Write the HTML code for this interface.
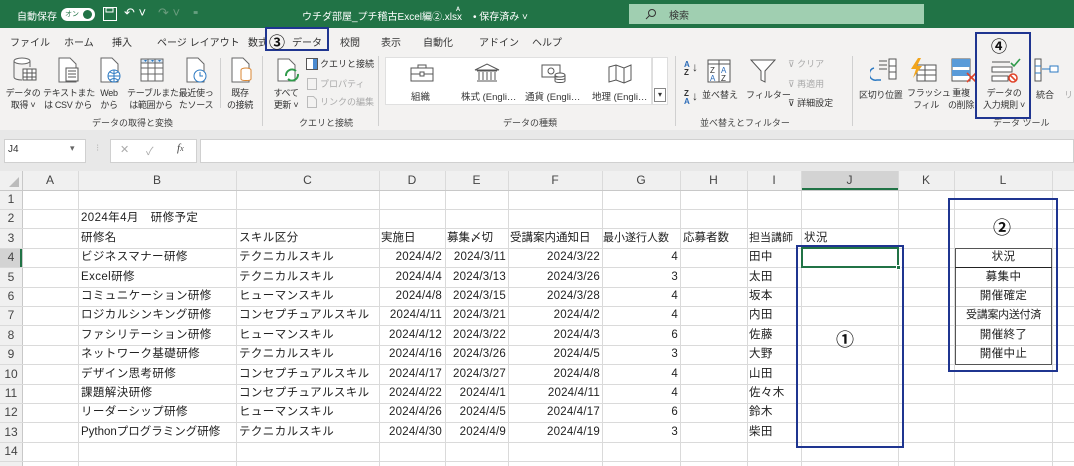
<!DOCTYPE html>
<html><head><meta charset="utf-8">
<style>
*{margin:0;padding:0;box-sizing:border-box}
body{width:1074px;height:466px;overflow:hidden;background:#fff;font-family:"Liberation Sans","Noto Sans CJK JP",sans-serif;position:relative;color:#333}
.a{position:absolute;white-space:nowrap}
.tb{font-size:10px;color:#fff}
.tab{font-size:10px;color:#333;top:34px}
.lb{font-size:9px;color:#333;text-align:center;line-height:12px;letter-spacing:-0.3px}
.gl{font-size:9px;color:#444;top:116px}
.sep{position:absolute;top:56px;width:1px;height:70px;background:#d0d0d0}
.vl{position:absolute;top:171px;width:1px;height:295px;background:#dadada}
.hl{position:absolute;left:0;width:1074px;height:1px;background:#dadada}
.ch{position:absolute;top:171px;height:19px;line-height:19px;font-size:12px;color:#444;text-align:center}
.rh{position:absolute;left:0;width:22px;height:19px;line-height:19px;font-size:12px;color:#444;text-align:center}
.c{position:absolute;height:19px;line-height:19px;font-size:11.5px;white-space:nowrap;color:#222;letter-spacing:0.4px;font-family:"Liberation Sans","Noto Sans CJK JP",sans-serif}
.r{text-align:right;letter-spacing:0.2px}
.bx{position:absolute;border:2px solid #1f3590}
.ic{position:absolute}
</style></head><body>
<!-- title bar -->
<div class="a" style="left:0;top:0;width:1074px;height:28px;background:#217346"></div>
<div class="a tb" style="left:17px;top:8px">自動保存</div>
<div class="a" style="left:61px;top:8px;width:34px;height:13px;border-radius:7px;background:#fff"></div>
<div class="a" style="left:65px;top:8px;font-size:7px;color:#217346;line-height:13px">オン</div>
<div class="a" style="left:83px;top:10px;width:9px;height:9px;border-radius:5px;background:#217346"></div>
<svg class="ic" style="left:102px;top:6px" width="16" height="16"><rect x="1.5" y="1.5" width="13" height="13" fill="none" stroke="#fff"/><rect x="4" y="2" width="7" height="4" fill="none" stroke="#fff"/></svg>
<div class="a tb" style="left:124px;top:5px;font-size:13px">↶ ˅</div>
<div class="a tb" style="left:158px;top:5px;font-size:13px;color:#6a9c7e">↷ ˅</div>
<div class="a tb" style="left:193px;top:6px">₌</div>
<div class="a tb" style="left:302px;top:8px">ウチダ部屋_プチ稽古Excel編②.xlsx</div>
<div class="a tb" style="left:456px;top:5px;font-size:9px">ᴬ</div>
<div class="a tb" style="left:473px;top:8px">• 保存済み ˅</div>
<div class="a" style="left:629px;top:4px;width:295px;height:20px;background:#a0cfb1"></div>
<svg class="ic" style="left:645px;top:8px" width="12" height="12"><circle cx="7" cy="5" r="3.5" fill="none" stroke="#333"/><line x1="4.5" y1="7.5" x2="1" y2="11" stroke="#333"/></svg>
<div class="a" style="left:669px;top:7px;font-size:10px;color:#333">検索</div>
<!-- ribbon -->
<div class="a" style="left:0;top:28px;width:1074px;height:102px;background:#f3f2f1"></div>
<div class="a" style="left:0;top:130px;width:1074px;height:41px;background:#e8e8e8"></div>
<div class="a tab" style="left:10px">ファイル</div>
<div class="a tab" style="left:64px">ホーム</div>
<div class="a tab" style="left:112px">挿入</div>
<div class="a tab" style="left:157px">ページ レイアウト</div>
<div class="a tab" style="left:248px">数式</div>
<div class="a tab" style="left:292px">データ</div>
<div class="a" style="left:292px;top:49px;width:27px;height:2px;background:#217346"></div>
<div class="a tab" style="left:340px">校閲</div>
<div class="a tab" style="left:381px">表示</div>
<div class="a tab" style="left:423px">自動化</div>
<div class="a tab" style="left:479px">アドイン</div>
<div class="a tab" style="left:532px">ヘルプ</div>
<div class="a" style="left:266px;top:28px;width:24px;height:22px;background:#f3f2f1"></div>
<div class="bx" style="left:265px;top:27px;width:64px;height:24px"></div>
<div class="a" style="left:269px;top:29px;font-size:16px;font-weight:bold;color:#111">③</div>
<!-- group 1 icons -->
<svg class="ic" style="left:12px;top:57px" width="26" height="26"><ellipse cx="10" cy="4" rx="8" ry="3" fill="#fff" stroke="#666"/><path d="M2 4v16c0 2 4 3 8 3" fill="none" stroke="#666"/><path d="M18 4v6" stroke="#666"/><rect x="11" y="12" width="13" height="11" fill="#fff" stroke="#555"/><path d="M11 16h13M11 20h13M15 12v11M20 12v11" stroke="#555"/></svg>
<svg class="ic" style="left:56px;top:57px" width="24" height="26"><path d="M3 1h11l6 6v18H3z" fill="#fff" stroke="#666"/><rect x="10" y="11" width="12" height="13" fill="#fff" stroke="#555"/><path d="M12 14h8M12 17h8M12 20h8" stroke="#555"/></svg>
<svg class="ic" style="left:98px;top:57px" width="24" height="26"><path d="M3 1h11l6 6v18H3z" fill="#fff" stroke="#666"/><circle cx="16" cy="19" r="6" fill="#fff" stroke="#2b79c2"/><path d="M10 19h12M16 13v12M12 15c3 2 5 2 8 0M12 23c3-2 5-2 8 0" fill="none" stroke="#2b79c2"/></svg>
<svg class="ic" style="left:139px;top:57px" width="26" height="26"><rect x="2" y="2" width="22" height="22" fill="#fff" stroke="#666"/><rect x="2" y="2" width="22" height="4" fill="#d7e7f6" stroke="#666"/><path d="M2 11h22M2 17h22M9 2v22M16 2v22" stroke="#666"/><path d="M5 3l1.5 2 1.5-2M12 3l1.5 2 1.5-2M19 3l1.5 2 1.5-2" fill="#2b79c2"/></svg>
<svg class="ic" style="left:184px;top:57px" width="24" height="26"><path d="M3 1h11l6 6v18H3z" fill="#fff" stroke="#666"/><circle cx="16" cy="19" r="6" fill="#fff" stroke="#2b79c2"/><path d="M16 15v4h3" fill="none" stroke="#2b79c2"/></svg>
<div class="sep" style="left:220px;top:58px;height:50px"></div>
<svg class="ic" style="left:229px;top:57px" width="24" height="26"><path d="M3 1h11l6 6v18H3z" fill="#fff" stroke="#666"/><ellipse cx="17" cy="13" rx="5" ry="2" fill="#fff" stroke="#d98532"/><path d="M12 13v9c0 2 10 2 10 0v-9" fill="#fff" stroke="#d98532"/></svg>
<div class="a lb" style="left:4px;top:87px;width:38px">データの<br>取得 ˅</div>
<div class="a lb" style="left:43px;top:87px;width:50px">テキストまた<br>は CSV から</div>
<div class="a lb" style="left:96px;top:87px;width:26px">Web<br>から</div>
<div class="a lb" style="left:127px;top:87px;width:48px">テーブルまた<br>は範囲から</div>
<div class="a lb" style="left:177px;top:87px;width:38px">最近使っ<br>たソース</div>
<div class="a lb" style="left:222px;top:87px;width:36px">既存<br>の接続</div>
<div class="a gl" style="left:92px">データの取得と変換</div>
<div class="sep" style="left:262px"></div>
<!-- group 2 -->
<svg class="ic" style="left:276px;top:58px" width="26" height="26"><path d="M2 1h11l6 6v16H2z" fill="#fff" stroke="#666"/><path d="M10 18a6 6 0 0 1 10-5M22 16a6 6 0 0 1-10 5" fill="none" stroke="#2f9a4a" stroke-width="2"/></svg>
<div class="a lb" style="left:268px;top:87px;width:36px">すべて<br>更新 ˅</div>
<svg class="ic" style="left:306px;top:58px" width="12" height="12"><rect x="0.5" y="0.5" width="11" height="11" fill="#fff" stroke="#555"/><rect x="7" y="1" width="4" height="10" fill="#4a8ad0"/></svg>
<div class="a" style="left:320px;top:57px;font-size:9px">クエリと接続</div>
<svg class="ic" style="left:306px;top:78px" width="12" height="12"><rect x="1.5" y="0.5" width="9" height="11" fill="none" stroke="#bbb"/></svg>
<div class="a" style="left:320px;top:77px;font-size:9px;color:#aaa">プロパティ</div>
<svg class="ic" style="left:306px;top:96px" width="12" height="12"><path d="M1.5 0.5h6l3 3v8h-9z" fill="none" stroke="#bbb"/></svg>
<div class="a" style="left:320px;top:95px;font-size:9px;color:#aaa">リンクの編集</div>
<div class="a gl" style="left:299px">クエリと接続</div>
<div class="sep" style="left:378px"></div>
<!-- group 3 -->
<div class="a" style="left:385px;top:57px;width:267px;height:48px;background:#fff;border:1px solid #e0e0e0"></div>
<svg class="ic" style="left:410px;top:64px" width="24" height="18"><rect x="1" y="4" width="22" height="13" fill="#fff" stroke="#555"/><rect x="8" y="1" width="8" height="3" fill="none" stroke="#555"/><path d="M1 10h22" stroke="#555"/><rect x="10" y="8" width="4" height="4" fill="#fff" stroke="#555"/></svg>
<svg class="ic" style="left:474px;top:63px" width="26" height="20"><path d="M1 7L13 1l12 6z" fill="#fff" stroke="#555"/><path d="M3 8h20M3 18h20M5 9v8M9 9v8M13 9v8M17 9v8M21 9v8" stroke="#555"/></svg>
<svg class="ic" style="left:541px;top:64px" width="26" height="20"><rect x="1" y="1" width="18" height="12" fill="#fff" stroke="#555"/><circle cx="10" cy="7" r="3" fill="none" stroke="#555"/><ellipse cx="19" cy="11" rx="5" ry="2" fill="#fff" stroke="#555"/><path d="M14 11v6c0 2 10 2 10 0v-6M14 14c0 2 10 2 10 0" fill="none" stroke="#555"/></svg>
<svg class="ic" style="left:608px;top:64px" width="24" height="20"><path d="M1 3l7-2 8 3 7-3v15l-7 3-8-3-7 2z M8 1v15M16 4v15" fill="#fff" stroke="#555"/></svg>
<div class="a" style="left:411px;top:89px;font-size:9.5px">組織</div>
<div class="a" style="left:461px;top:89px;font-size:9.5px">株式 (Engli…</div>
<div class="a" style="left:525px;top:89px;font-size:9.5px">通貨 (Engli…</div>
<div class="a" style="left:592px;top:89px;font-size:9.5px">地理 (Engli…</div>
<div class="a" style="left:652px;top:57px;width:16px;height:48px;background:#fff;border:1px solid #ddd"></div>
<div class="a" style="left:654px;top:88px;width:12px;height:14px;border:1px solid #888;font-size:8px;text-align:center;line-height:12px">▾</div>
<div class="a gl" style="left:503px">データの種類</div>
<div class="sep" style="left:675px"></div>
<!-- group 4 -->
<div class="a" style="left:684px;top:61px;font-size:8px;line-height:8px;color:#2b6bb8;font-weight:bold">A<br><span style="color:#333">Z</span></div>
<div class="a" style="left:692px;top:60px;font-size:12px">↓</div>
<div class="a" style="left:684px;top:90px;font-size:8px;line-height:8px;font-weight:bold">Z<br><span style="color:#2b6bb8">A</span></div>
<div class="a" style="left:692px;top:89px;font-size:12px">↓</div>
<svg class="ic" style="left:707px;top:59px" width="24" height="24"><rect x="1" y="1" width="22" height="22" fill="#fff" stroke="#555"/><path d="M1 5h22M12 1v22" stroke="#555"/><text x="3" y="14" font-size="8" fill="#333">Z</text><text x="14" y="14" font-size="8" fill="#2b6bb8">A</text><text x="3" y="22" font-size="8" fill="#2b6bb8">A</text><text x="14" y="22" font-size="8" fill="#333">Z</text></svg>
<div class="a" style="left:702px;top:88px;font-size:9px">並べ替え</div>
<svg class="ic" style="left:750px;top:58px" width="26" height="26"><path d="M1 2h24L15 13v11l-4-2v-9z" fill="#fff" stroke="#555"/></svg>
<div class="a" style="left:746px;top:88px;font-size:9px">フィルター</div>
<div class="a" style="left:788px;top:57px;font-size:9px;color:#aaa">⊽ クリア</div>
<div class="a" style="left:788px;top:77px;font-size:9px;color:#aaa">⊽ 再適用</div>
<div class="a" style="left:788px;top:96px;font-size:9px">⊽ 詳細設定</div>
<div class="a gl" style="left:700px">並べ替えとフィルター</div>
<div class="sep" style="left:852px"></div>
<!-- group 5 -->
<svg class="ic" style="left:870px;top:58px" width="28" height="26"><path d="M9 3h8M9 7h8M9 11h8" stroke="#555"/><rect x="19" y="1" width="7" height="20" fill="#fff" stroke="#555"/><path d="M19 8h7M19 14h7" stroke="#555"/><path d="M4 10a6 6 0 0 0 3 12h4" fill="none" stroke="#2b79c2" stroke-width="1.5"/></svg>
<div class="a" style="left:859px;top:88px;font-size:9px;letter-spacing:-0.3px">区切り位置</div>
<svg class="ic" style="left:907px;top:57px" width="30" height="26"><rect x="10" y="8" width="19" height="16" fill="#fff" stroke="#555"/><path d="M10 13h19M10 18h19M18 8v16" stroke="#555"/><path d="M11 1l-7 11h5l-3 9 9-12h-5l4-8z" fill="#f2a51c"/></svg>
<div class="a lb" style="left:907px;top:87px;width:38px">フラッシュ<br>フィル</div>
<svg class="ic" style="left:950px;top:58px" width="28" height="26"><rect x="2" y="1" width="18" height="22" fill="#fff" stroke="#555"/><rect x="2" y="1" width="18" height="8" fill="#5a9bd8"/><rect x="2" y="12" width="18" height="6" fill="#5a9bd8"/><path d="M17 15l9 9M26 15l-9 9" stroke="#e0452c" stroke-width="1.6"/></svg>
<div class="a lb" style="left:945px;top:87px;width:32px">重複<br>の削除</div>
<svg class="ic" style="left:991px;top:58px" width="30" height="26"><rect x="1" y="9" width="20" height="5" fill="#fff" stroke="#555"/><rect x="1" y="18" width="16" height="5" fill="#fff" stroke="#555"/><path d="M1 4h18" stroke="#555"/><path d="M20 5l3 3 6-7" fill="none" stroke="#2f9a4a" stroke-width="1.6"/><circle cx="22" cy="20" r="4" fill="#fff" stroke="#e0452c" stroke-width="1.6"/><path d="M19 17l6 6" stroke="#e0452c" stroke-width="1.6"/></svg>
<div class="a lb" style="left:979px;top:87px;width:50px">データの<br>入力規則 ˅</div>
<div class="bx" style="left:975px;top:32px;width:56px;height:87px"></div>
<div class="a" style="left:991px;top:33px;font-size:16px;font-weight:bold;color:#111">④</div>
<svg class="ic" style="left:1034px;top:58px" width="26" height="26"><rect x="1" y="1" width="6" height="22" fill="#fff" stroke="#555"/><path d="M1 8h6M1 15h6M8 11h8" stroke="#2b79c2"/><rect x="16" y="8" width="8" height="6" fill="#fff" stroke="#2b79c2"/></svg>
<div class="a" style="left:1036px;top:88px;font-size:9px">統合</div>
<div class="a" style="left:1064px;top:88px;font-size:9px;color:#aaa">リ</div>
<div class="a gl" style="left:993px">データ ツール</div>
<!-- formula bar -->
<div class="a" style="left:4px;top:139px;width:82px;height:24px;background:#fff;border:1px solid #d0d0d0"></div>
<div class="a" style="left:8px;top:144px;font-size:10px;color:#333">J4</div>
<div class="a" style="left:70px;top:143px;font-size:9px;color:#666">▾</div>
<div class="a" style="left:96px;top:143px;font-size:10px;color:#bbb">⁝</div>
<div class="a" style="left:110px;top:139px;width:87px;height:24px;background:#fff;border:1px solid #d0d0d0"></div>
<div class="a" style="left:120px;top:143px;font-size:11px;color:#aaa">✕</div>
<div class="a" style="left:146px;top:143px;font-size:11px;color:#aaa">✓</div>
<div class="a" style="left:177px;top:142px;font-size:11px;color:#444;font-style:italic;font-family:'Liberation Serif',serif">f<span style="font-size:8px">x</span></div>
<div class="a" style="left:200px;top:139px;width:874px;height:24px;background:#fff;border:1px solid #d0d0d0"></div>
<!-- grid headers -->
<div class="a" style="left:0;top:171px;width:1074px;height:19px;background:#f0f0f0"></div>
<div class="a" style="left:0;top:171px;width:22px;height:295px;background:#f0f0f0"></div>
<div class="a" style="left:801px;top:171px;width:97px;height:19px;background:#d3d3d3"></div>
<div class="a" style="left:801px;top:188px;width:97px;height:2px;background:#217346"></div>
<div class="a" style="left:0;top:248px;width:22px;height:19px;background:#d3d3d3"></div>
<div class="a" style="left:20px;top:248px;width:2px;height:19px;background:#217346"></div>
<svg class="ic" style="left:6px;top:176px" width="14" height="12"><path d="M13 1v10H3z" fill="#bbb"/></svg>
<div class="ch" style="left:22px;width:56px">A</div>
<div class="ch" style="left:78px;width:158px">B</div>
<div class="ch" style="left:236px;width:143px">C</div>
<div class="ch" style="left:379px;width:66px">D</div>
<div class="ch" style="left:445px;width:63px">E</div>
<div class="ch" style="left:508px;width:94px">F</div>
<div class="ch" style="left:602px;width:78px">G</div>
<div class="ch" style="left:680px;width:67px">H</div>
<div class="ch" style="left:747px;width:54px">I</div>
<div class="ch" style="left:801px;width:97px">J</div>
<div class="ch" style="left:898px;width:56px">K</div>
<div class="ch" style="left:954px;width:98px">L</div>
<!-- lines -->
<div class="vl" style="left:22px;background:#c8c8c8"></div>
<div class="vl" style="left:78px"></div><div class="vl" style="left:236px"></div><div class="vl" style="left:379px"></div><div class="vl" style="left:445px"></div><div class="vl" style="left:508px"></div><div class="vl" style="left:602px"></div><div class="vl" style="left:680px"></div><div class="vl" style="left:747px"></div><div class="vl" style="left:801px"></div><div class="vl" style="left:898px"></div><div class="vl" style="left:954px"></div><div class="vl" style="left:1052px"></div>
<div class="hl" style="top:190px;background:#c8c8c8"></div>
<div class="hl" style="top:209px"></div><div class="hl" style="top:228px"></div><div class="hl" style="top:248px"></div><div class="hl" style="top:267px"></div><div class="hl" style="top:287px"></div><div class="hl" style="top:306px"></div><div class="hl" style="top:325px"></div><div class="hl" style="top:345px"></div><div class="hl" style="top:364px"></div><div class="hl" style="top:384px"></div><div class="hl" style="top:403px"></div><div class="hl" style="top:422px"></div><div class="hl" style="top:442px"></div><div class="hl" style="top:461px"></div>
<!-- row headers -->
<div class="rh" style="top:190px">1</div><div class="rh" style="top:209px">2</div><div class="rh" style="top:229px">3</div><div class="rh" style="top:248px">4</div><div class="rh" style="top:268px">5</div><div class="rh" style="top:287px">6</div><div class="rh" style="top:306px">7</div><div class="rh" style="top:326px">8</div><div class="rh" style="top:345px">9</div><div class="rh" style="top:365px">10</div><div class="rh" style="top:384px">11</div><div class="rh" style="top:403px">12</div><div class="rh" style="top:423px">13</div><div class="rh" style="top:442px">14</div>
<!-- cells -->
<div class="c" style="left:81px;top:209px">2024年4月　研修予定</div>
<div class="c" style="left:81px;top:229px">研修名</div>
<div class="c" style="left:239px;top:229px">スキル区分</div>
<div class="c" style="left:381px;top:229px;letter-spacing:0">実施日</div>
<div class="c" style="left:447px;top:229px;letter-spacing:0">募集〆切</div>
<div class="c" style="left:510px;top:229px;letter-spacing:0">受講案内通知日</div>
<div class="c" style="left:603px;top:229px;letter-spacing:0;font-size:11px">最小遂行人数</div>
<div class="c" style="left:683px;top:229px;letter-spacing:0">応募者数</div>
<div class="c" style="left:749px;top:229px;letter-spacing:0;font-size:11px">担当講師</div>
<div class="c" style="left:804px;top:229px">状況</div>

<div class="c" style="left:81px;top:248px">ビジネスマナー研修</div><div class="c" style="left:239px;top:248px">テクニカルスキル</div><div class="c r" style="left:379px;width:63px;top:248px">2024/4/2</div><div class="c r" style="left:445px;width:61px;top:248px">2024/3/11</div><div class="c r" style="left:508px;width:92px;top:248px">2024/3/22</div><div class="c r" style="left:602px;width:76px;top:248px">4</div><div class="c" style="left:749px;top:248px">田中</div>
<div class="c" style="left:81px;top:268px">Excel研修</div><div class="c" style="left:239px;top:268px">テクニカルスキル</div><div class="c r" style="left:379px;width:63px;top:268px">2024/4/4</div><div class="c r" style="left:445px;width:61px;top:268px">2024/3/13</div><div class="c r" style="left:508px;width:92px;top:268px">2024/3/26</div><div class="c r" style="left:602px;width:76px;top:268px">3</div><div class="c" style="left:749px;top:268px">太田</div>
<div class="c" style="left:81px;top:287px">コミュニケーション研修</div><div class="c" style="left:239px;top:287px">ヒューマンスキル</div><div class="c r" style="left:379px;width:63px;top:287px">2024/4/8</div><div class="c r" style="left:445px;width:61px;top:287px">2024/3/15</div><div class="c r" style="left:508px;width:92px;top:287px">2024/3/28</div><div class="c r" style="left:602px;width:76px;top:287px">4</div><div class="c" style="left:749px;top:287px">坂本</div>
<div class="c" style="left:81px;top:306px">ロジカルシンキング研修</div><div class="c" style="left:239px;top:306px">コンセプチュアルスキル</div><div class="c r" style="left:379px;width:63px;top:306px">2024/4/11</div><div class="c r" style="left:445px;width:61px;top:306px">2024/3/21</div><div class="c r" style="left:508px;width:92px;top:306px">2024/4/2</div><div class="c r" style="left:602px;width:76px;top:306px">4</div><div class="c" style="left:749px;top:306px">内田</div>
<div class="c" style="left:81px;top:326px">ファシリテーション研修</div><div class="c" style="left:239px;top:326px">ヒューマンスキル</div><div class="c r" style="left:379px;width:63px;top:326px">2024/4/12</div><div class="c r" style="left:445px;width:61px;top:326px">2024/3/22</div><div class="c r" style="left:508px;width:92px;top:326px">2024/4/3</div><div class="c r" style="left:602px;width:76px;top:326px">6</div><div class="c" style="left:749px;top:326px">佐藤</div>
<div class="c" style="left:81px;top:345px">ネットワーク基礎研修</div><div class="c" style="left:239px;top:345px">テクニカルスキル</div><div class="c r" style="left:379px;width:63px;top:345px">2024/4/16</div><div class="c r" style="left:445px;width:61px;top:345px">2024/3/26</div><div class="c r" style="left:508px;width:92px;top:345px">2024/4/5</div><div class="c r" style="left:602px;width:76px;top:345px">3</div><div class="c" style="left:749px;top:345px">大野</div>
<div class="c" style="left:81px;top:365px">デザイン思考研修</div><div class="c" style="left:239px;top:365px">コンセプチュアルスキル</div><div class="c r" style="left:379px;width:63px;top:365px">2024/4/17</div><div class="c r" style="left:445px;width:61px;top:365px">2024/3/27</div><div class="c r" style="left:508px;width:92px;top:365px">2024/4/8</div><div class="c r" style="left:602px;width:76px;top:365px">4</div><div class="c" style="left:749px;top:365px">山田</div>
<div class="c" style="left:81px;top:384px">課題解決研修</div><div class="c" style="left:239px;top:384px">コンセプチュアルスキル</div><div class="c r" style="left:379px;width:63px;top:384px">2024/4/22</div><div class="c r" style="left:445px;width:61px;top:384px">2024/4/1</div><div class="c r" style="left:508px;width:92px;top:384px">2024/4/11</div><div class="c r" style="left:602px;width:76px;top:384px">4</div><div class="c" style="left:749px;top:384px">佐々木</div>
<div class="c" style="left:81px;top:403px">リーダーシップ研修</div><div class="c" style="left:239px;top:403px">ヒューマンスキル</div><div class="c r" style="left:379px;width:63px;top:403px">2024/4/26</div><div class="c r" style="left:445px;width:61px;top:403px">2024/4/5</div><div class="c r" style="left:508px;width:92px;top:403px">2024/4/17</div><div class="c r" style="left:602px;width:76px;top:403px">6</div><div class="c" style="left:749px;top:403px">鈴木</div>
<div class="c" style="left:81px;top:423px;letter-spacing:0">Pythonプログラミング研修</div><div class="c" style="left:239px;top:423px">テクニカルスキル</div><div class="c r" style="left:379px;width:63px;top:423px">2024/4/30</div><div class="c r" style="left:445px;width:61px;top:423px">2024/4/9</div><div class="c r" style="left:508px;width:92px;top:423px">2024/4/19</div><div class="c r" style="left:602px;width:76px;top:423px">3</div><div class="c" style="left:749px;top:423px">柴田</div>
<!-- active cell -->
<div class="a" style="left:801px;top:247px;width:98px;height:21px;border:2px solid #217346"></div>
<div class="a" style="left:896px;top:265px;width:5px;height:5px;background:#217346;border:1px solid #fff"></div>
<!-- list L -->
<div class="a" style="left:955px;top:248px;width:97px;height:117px;border:1px solid #555;background:#fff"></div>
<div class="a" style="left:955px;top:267px;width:97px;height:1px;background:#222"></div>
<div class="a" style="left:956px;top:287px;width:95px;height:1px;background:#ccc"></div>
<div class="a" style="left:956px;top:306px;width:95px;height:1px;background:#ccc"></div>
<div class="a" style="left:956px;top:325px;width:95px;height:1px;background:#ccc"></div>
<div class="a" style="left:956px;top:345px;width:95px;height:1px;background:#ccc"></div>
<div class="c" style="left:955px;width:97px;text-align:center;top:248px">状況</div>
<div class="c" style="left:955px;width:97px;text-align:center;top:268px">募集中</div>
<div class="c" style="left:955px;width:97px;text-align:center;top:287px">開催確定</div>
<div class="c" style="left:955px;width:97px;text-align:center;top:306px;letter-spacing:-0.3px;font-size:11px">受講案内送付済</div>
<div class="c" style="left:955px;width:97px;text-align:center;top:326px">開催終了</div>
<div class="c" style="left:955px;width:97px;text-align:center;top:345px">開催中止</div>
<!-- annotation boxes -->
<div class="bx" style="left:796px;top:245px;width:108px;height:203px"></div>
<div class="a" style="left:836px;top:326px;font-size:18px;font-weight:bold;color:#111">①</div>
<div class="bx" style="left:948px;top:198px;width:110px;height:174px"></div>
<div class="a" style="left:993px;top:214px;font-size:18px;font-weight:bold;color:#111">②</div>
</body></html>
